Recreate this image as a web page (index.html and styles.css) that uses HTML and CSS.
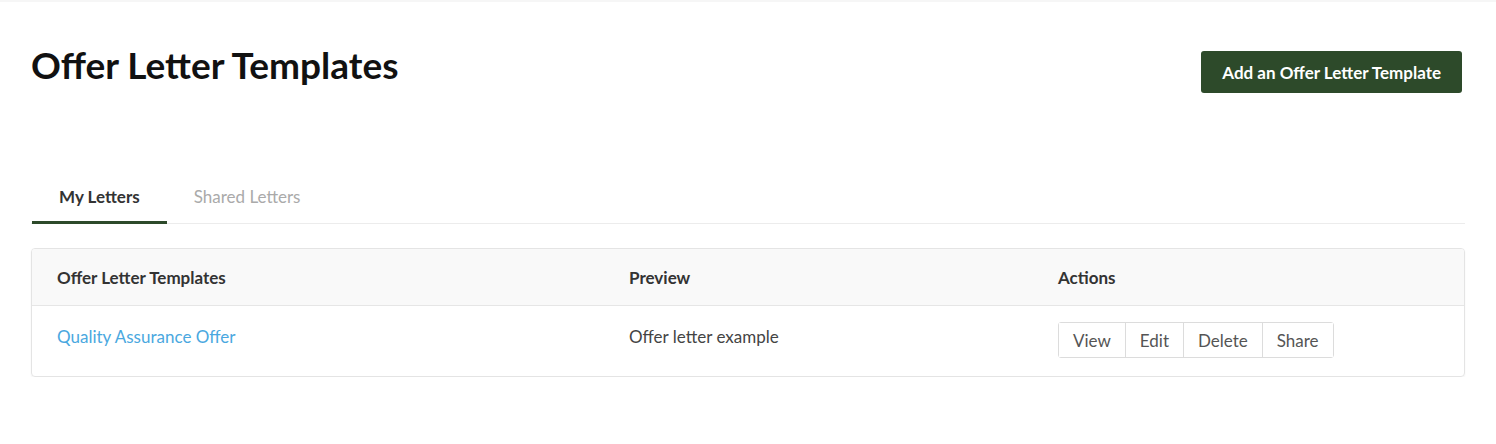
FILE: index.html
```html
<!DOCTYPE html>
<html lang="en">
  <head>
    <meta charset="UTF-8" />
    <meta name="viewport" content="width=device-width, initial-scale=1.0" />
    <title>Offer Letter Templates</title>
    <link rel="stylesheet" href="styles.css">
  </head>
  <body>
    <div class="page">
      <div class="page-header">
        <h1>Offer Letter Templates</h1>
        <button class="add-button">Add an Offer Letter Template</button>
      </div>

      <div class="tabs">
        <a class="tab active">My Letters</a>
        <a class="tab">Shared Letters</a>
      </div>

      <div class="table-card">
        <div class="table-row table-head">
          <div class="cell">Offer Letter Templates</div>
          <div class="cell">Preview</div>
          <div class="cell">Actions</div>
        </div>
        <div class="table-row">
          <div class="cell text"><a class="template-link">Quality Assurance Offer</a></div>
          <div class="cell text">Offer letter example</div>
          <div class="cell">
            <div class="btn-group">
              <button>View</button>
              <button>Edit</button>
              <button>Delete</button>
              <button>Share</button>
            </div>
          </div>
        </div>
      </div>
    </div>
  </body>
</html>
```

FILE: styles.css
```css
body {
  margin: 0;
  font-family: Lato, "Noto Sans", sans-serif;
  color: #333;
  background: #fff;
  border-top: 2px solid #f6f6f6;
}

.page {
  padding: 0 31px;
}

.page-header {
  display: flex;
  justify-content: space-between;
  align-items: flex-start;
  padding-top: 40px;
}

h1 {
  margin: 0;
  font-size: 37px;
  font-weight: 700;
  color: #111;
  line-height: 46px;
}

.add-button {
  margin-top: 9px;
  margin-right: 3px;
  height: 42px;
  padding: 0 21px;
  background-color: #2d4a2a;
  color: #fff;
  border: none;
  border-radius: 3px;
  font-family: inherit;
  font-size: 17px;
  font-weight: 700;
  cursor: pointer;
}

.tabs {
  display: flex;
  margin-top: 93px;
  border-bottom: 1px solid #ececec;
}

.tab {
  padding: 0 27px 14px;
  font-size: 17px;
  color: #aaa;
  border-bottom: 3px solid transparent;
  margin-bottom: -1px;
  cursor: pointer;
}

.tab:first-child {
  margin-left: 1px;
}

.tab.active {
  color: #333;
  font-weight: 700;
  border-bottom-color: #2d4a2a;
}

.table-card {
  margin-top: 24px;
  border: 1px solid #e4e4e4;
  border-radius: 4px;
  box-shadow: 0 1px 2px rgba(0, 0, 0, 0.05);
  overflow: hidden;
}

.table-row {
  display: grid;
  grid-template-columns: 572px 429px 1fr;
  align-items: center;
  padding-left: 25px;
  height: 70px;
  font-size: 17px;
  color: #444;
}

.table-head {
  height: 56px;
  background: #f9f9f9;
  border-bottom: 1px solid #e6e6e6;
  font-weight: 700;
  color: #333;
}

.cell.text {
  padding-bottom: 10px;
}

.template-link {
  color: #4aa8e0;
  cursor: pointer;
}

.btn-group {
  display: inline-flex;
  border: 1px solid #dcdcdc;
  border-radius: 3px;
  margin-bottom: 2px;
}

.btn-group button {
  height: 34px;
  padding: 0 14px;
  background: #fff;
  border: none;
  border-left: 1px solid #dcdcdc;
  font-family: inherit;
  font-size: 17px;
  color: #555;
  cursor: pointer;
}

.btn-group button:first-child {
  border-left: none;
}
```
